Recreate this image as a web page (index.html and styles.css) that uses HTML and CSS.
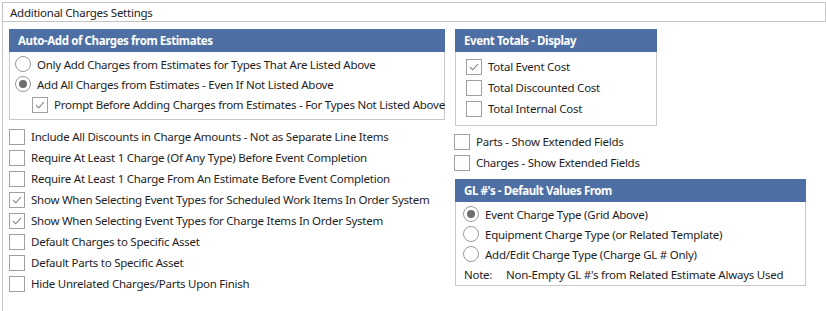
FILE: index.html
```html
<!DOCTYPE html>
<html>
<head>
<meta charset="utf-8">
<link rel="stylesheet" href="styles.css">
</head>
<body>
<div class="frame">
  <div class="titlebar">Additional Charges Settings</div>
  <div class="content">
    <div class="col-left">
      <section class="panel panel-auto">
        <div class="panel-head">Auto-Add of Charges from Estimates</div>
        <div class="panel-body auto-body">
          <div class="row"><span class="radio"></span><span>Only Add Charges from Estimates for Types That Are Listed Above</span></div>
          <div class="row"><span class="radio on"></span><span>Add All Charges from Estimates - Even If Not Listed Above</span></div>
          <div class="row indent"><span class="check on"><svg viewBox="0 0 16 16"><path d="M3.5 8.2 L6.6 11.2 L12.5 4.6"/></svg></span><span>Prompt Before Adding Charges from Estimates - For Types Not Listed Above</span></div>
        </div>
      </section>
      <div class="checklist">
        <div class="row r21"><span class="check"></span><span>Include All Discounts in Charge Amounts - Not as Separate Line Items</span></div>
        <div class="row r21"><span class="check"></span><span>Require At Least 1 Charge (Of Any Type) Before Event Completion</span></div>
        <div class="row r21"><span class="check"></span><span>Require At Least 1 Charge From An Estimate Before Event Completion</span></div>
        <div class="row r21"><span class="check on"><svg viewBox="0 0 16 16"><path d="M3.5 8.2 L6.6 11.2 L12.5 4.6"/></svg></span><span>Show When Selecting Event Types for Scheduled Work Items In Order System</span></div>
        <div class="row r21"><span class="check on"><svg viewBox="0 0 16 16"><path d="M3.5 8.2 L6.6 11.2 L12.5 4.6"/></svg></span><span>Show When Selecting Event Types for Charge Items In Order System</span></div>
        <div class="row r21"><span class="check"></span><span>Default Charges to Specific Asset</span></div>
        <div class="row r21"><span class="check"></span><span>Default Parts to Specific Asset</span></div>
        <div class="row r21"><span class="check"></span><span>Hide Unrelated Charges/Parts Upon Finish</span></div>
      </div>
    </div>
    <div class="col-right">
      <section class="panel panel-totals">
        <div class="panel-head">Event Totals - Display</div>
        <div class="panel-body totals-body">
          <div class="row r21"><span class="check on"><svg viewBox="0 0 16 16"><path d="M3.5 8.2 L6.6 11.2 L12.5 4.6"/></svg></span><span>Total Event Cost</span></div>
          <div class="row r21"><span class="check"></span><span>Total Discounted Cost</span></div>
          <div class="row r21"><span class="check"></span><span>Total Internal Cost</span></div>
        </div>
      </section>
      <div class="extended">
        <div class="row r21"><span class="check"></span><span>Parts - Show Extended Fields</span></div>
        <div class="row r21"><span class="check"></span><span>Charges - Show Extended Fields</span></div>
      </div>
      <section class="panel panel-gl">
        <div class="panel-head">GL #'s - Default Values From</div>
        <div class="panel-body gl-body">
          <div class="row"><span class="radio on"></span><span>Event Charge Type (Grid Above)</span></div>
          <div class="row"><span class="radio"></span><span>Equipment Charge Type (or Related Template)</span></div>
          <div class="row"><span class="radio"></span><span>Add/Edit Charge Type (Charge GL # Only)</span></div>
          <div class="row note"><span class="note-label">Note:</span><span>Non-Empty GL #'s from Related Estimate Always Used</span></div>
        </div>
      </section>
    </div>
  </div>
</div>
</body>
</html>
```

FILE: styles.css
```css
html, body {
  margin: 0;
  padding: 0;
  background: #ffffff;
}
body {
  font-family: "Noto Sans", "Open Sans", sans-serif;
  font-size: 11.5px;
  letter-spacing: -0.25px;
  color: #1e1e1e;
  width: 826px;
  height: 311px;
  overflow: hidden;
}
.frame {
  margin: 2px 0 0 2px;
  border-left: 1px solid #c4c4c4;
  height: 309px;
}
.titlebar {
  box-sizing: border-box;
  height: 20px;
  width: 824px;
  margin-left: -1px;
  border: 1px solid #c4c4c4;
  padding-left: 7px;
  line-height: 19px;
  color: #222;
}
.content {
  display: flex;
  padding: 7px 0 0 6px;
  gap: 9px;
}
.col-left {
  width: 436px;
}
.col-right {
  display: flex;
  flex-direction: column;
}
.panel {
  border: 1px solid #c8c8c8;
  border-top: none;
}
.panel-head {
  background: #4e6fa3;
  color: #ffffff;
  font-weight: bold;
  letter-spacing: -0.4px;
  height: 23px;
  line-height: 23px;
  padding-left: 9px;
  margin: 0 -1px;
}
.row {
  display: flex;
  align-items: center;
  height: 20px;
  gap: 6px;
  white-space: nowrap;
}
.r21 { height: 21px; }
.check {
  box-sizing: border-box;
  width: 16px;
  height: 16px;
  border: 1px solid #a0a0a0;
  background: #fff;
  flex: none;
  display: flex;
}
.check svg {
  width: 14px;
  height: 14px;
}
.check path {
  fill: none;
  stroke: #7a7a7a;
  stroke-width: 1.2;
}
.radio {
  box-sizing: border-box;
  width: 16px;
  height: 16px;
  border: 1px solid #9a9a9a;
  border-radius: 50%;
  background: #fff;
  flex: none;
  display: flex;
  align-items: center;
  justify-content: center;
}
.radio.on::after {
  content: "";
  width: 8px;
  height: 8px;
  border-radius: 50%;
  background: #6e6e6e;
}
.auto-body {
  padding: 2px 0 4px 5px;
}
.auto-body .indent {
  padding-left: 17px;
  height: 21px;
}
.checklist {
  margin-top: 6px;
}
.panel-totals {
  width: 200px;
  margin-left: 1px;
}
.totals-body {
  padding: 4px 0 6px 10px;
}
.extended {
  margin-top: 5px;
}
.panel-gl {
  width: 349px;
  margin-left: 1px;
  margin-top: 6px;
}
.gl-body {
  padding: 2px 0 1px 7px;
}
.note {
  gap: 0;
}
.note-label {
  width: 42px;
  padding-left: 1px;
}
```
